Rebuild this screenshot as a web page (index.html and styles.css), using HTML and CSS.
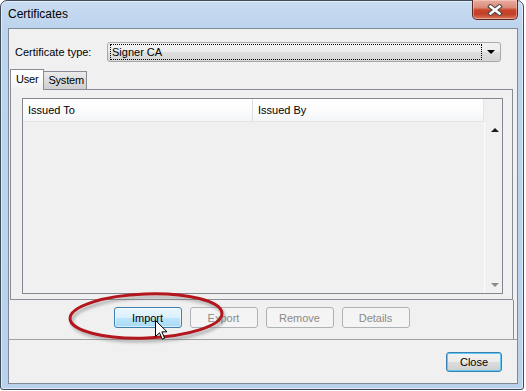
FILE: index.html
```html
<!doctype html>
<html lang="en">

<head>
    <meta charset="UTF-8" />
    <title>Certificates</title>
    <link rel="stylesheet" href="styles.css">
</head>

<body>
<div class="stage">
    <div class="window">
        <div class="titlebar">
            <span class="title">Certificates</span>
            <div class="close-x">
                <svg width="16" height="12" viewBox="0 0 16 12">
                    <path d="M3.5 2.5 L12.5 9.5 M12.5 2.5 L3.5 9.5" stroke="#4a4a4a" stroke-width="4.6" stroke-linecap="square" />
                    <path d="M3.5 2.5 L12.5 9.5 M12.5 2.5 L3.5 9.5" stroke="#fff" stroke-width="2.4" stroke-linecap="square" />
                </svg>
            </div>
        </div>

        <div class="client">
            <div class="main">
                <div class="type-row">
                    <label class="type-label">Certificate type:</label>
                    <div class="combo">
                        <span class="combo-value">Signer CA</span>
                        <span class="combo-arrow"></span>
                    </div>
                </div>

                <div class="tabs">
                    <div class="tab active">User</div>
                    <div class="tab">System</div>
                </div>

                <div class="tab-panel">
                    <div class="list">
                        <div class="list-header">
                            <div class="col first">Issued To</div>
                            <div class="col">Issued By</div>
                        </div>
                        <div class="list-corner"></div>
                        <div class="list-body"></div>
                        <div class="scrollbar">
                            <span class="arrow up"></span>
                            <span class="arrow down"></span>
                        </div>
                    </div>
                </div>

                <div class="actions">
                    <button class="btn hot">Import</button>
                    <button class="btn" disabled>Export</button>
                    <button class="btn" disabled>Remove</button>
                    <button class="btn" disabled>Details</button>
                </div>
            </div>

            <div class="footer">
                <button class="btn default">Close</button>
            </div>
        </div>
    </div>

    <!-- annotation drawn over the dialog -->
    <svg class="ring" width="180" height="70" viewBox="0 0 180 70">
        <defs>
            <filter id="soft" x="-20%" y="-40%" width="140%" height="180%">
                <feGaussianBlur stdDeviation="1.6" />
            </filter>
        </defs>
        <ellipse cx="88" cy="34" rx="76" ry="22" transform="rotate(-2 88 34)" fill="none" stroke="#777" stroke-opacity="0.55" stroke-width="3" filter="url(#soft)" />
        <ellipse cx="86" cy="31" rx="76" ry="22" transform="rotate(-2 86 31)" fill="none" stroke="#b3161d" stroke-width="3" />
    </svg>

    <svg class="pointer" width="14" height="21" viewBox="0 0 14 21">
        <path d="M0.5 0.5 V16.5 L4.5 12.8 L7.3 19.2 L9.6 18.2 L6.9 11.8 H12 Z" fill="#fff" stroke="#000" stroke-width="1" stroke-linejoin="round" />
    </svg>
</div>
</body>

</html>
```

FILE: styles.css
```css
* {
    box-sizing: border-box;
}

body {
    margin: 0;
    background: #fff;
    font-family: "Liberation Sans", Arial, sans-serif;
    font-size: 11px;
    color: #000;
}

.stage {
    position: relative;
    width: 526px;
    height: 391px;
}

.window {
    width: 524px;
    height: 390px;
    border: 1px solid #3e4b59;
    border-radius: 7px 7px 3px 3px;
    background: linear-gradient(to bottom, #c8dbf1 0, #bdd4ed 28px, #b9d1ea 100%);
    box-shadow: inset 0 0 0 1px rgba(255, 255, 255, 0.55);
    padding: 0 5px 5px 7px;
    display: flex;
    flex-direction: column;
}

.titlebar {
    height: 27px;
    display: flex;
    justify-content: space-between;
    align-items: flex-start;
}

.title {
    font-size: 12px;
    line-height: 14px;
    margin-top: 6px;
}

.close-x {
    width: 46px;
    height: 20px;
    margin-top: -1px;
    border: 1px solid #5c2a22;
    border-top: none;
    border-radius: 0 0 5px 5px;
    background: linear-gradient(to bottom, #e9ad9f 0, #dc8a78 40%, #c8452b 52%, #c24027 75%, #dc7b60 100%);
    box-shadow: inset 0 0 0 1px rgba(255, 220, 210, 0.45);
    display: flex;
    align-items: center;
    justify-content: center;
}

.client {
    flex: 1;
    background: #f0f0f0;
    border: 1px solid #7d8a97;
    display: flex;
    flex-direction: column;
}

.main {
    height: 311px;
    border-bottom: 1px solid #a0a0a0;
    display: flex;
    flex-direction: column;
}

.type-row {
    display: flex;
    align-items: center;
    margin: 13px 16px 0 6px;
}

.type-label {
    width: 92px;
    flex: none;
}

.combo {
    flex: 1;
    height: 20px;
    border: 1px solid #a9a9a9;
    border-radius: 3px;
    background: linear-gradient(to bottom, #f3f3f3 0, #ececec 50%, #dedede 51%, #d6d6d6 100%);
    display: flex;
    align-items: center;
    padding: 1px 5px 1px 2px;
}

.combo-value {
    flex: 1;
    height: 16px;
    line-height: 14px;
    border: 1px dotted #000;
    padding-left: 1px;
}

.combo-arrow {
    width: 0;
    height: 0;
    margin-left: 5px;
    border-left: 4px solid transparent;
    border-right: 4px solid transparent;
    border-top: 4px solid #000;
}

.tabs {
    display: flex;
    align-items: flex-end;
    height: 20px;
    margin: 7px 0 0 1px;
    position: relative;
    z-index: 1;
}

.tab {
    height: 18px;
    padding: 0 2px 0 4px;
    border: 1px solid #898c95;
    border-bottom: none;
    background: linear-gradient(to bottom, #ebebeb 0, #dcdcdc 50%, #cfcfcf 100%);
    line-height: 17px;
    margin-left: -1px;
    letter-spacing: -0.2px;
}

.tab.active {
    height: 21px;
    margin-bottom: -1px;
    padding: 0 5px 0 5px;
    margin-left: 0;
    background: linear-gradient(to bottom, #fff 0, #fbfbfb 50%, #f0f0f0 100%);
    line-height: 19px;
}

.tab-panel {
    height: 211px;
    margin: 0 4px 0 1px;
    border: 1px solid #898c95;
    padding: 8px 9px 5px 11px;
}

.list {
    height: 100%;
    border: 1px solid #828790;
    display: grid;
    grid-template-columns: 1fr 18px;
    grid-template-rows: 23px 1fr;
}

.list-header {
    display: flex;
    background: linear-gradient(to bottom, #fff 0, #fcfcfd 50%, #f4f5f7 100%);
    border-bottom: 1px solid #e3e4e6;
    border-right: 1px solid #e3e4e6;
}

.col {
    padding-left: 5px;
    line-height: 22px;
    flex: 1;
}

.col.first {
    flex: none;
    width: 230px;
    border-right: 1px solid #dcdde0;
}

.scrollbar {
    border-left: 1px solid #fbfbfb;
    position: relative;
}

.arrow {
    position: absolute;
    left: 6px;
    width: 0;
    height: 0;
    border-left: 4px solid transparent;
    border-right: 4px solid transparent;
}

.arrow.up {
    top: 6px;
    border-bottom: 4px solid #1a1a1a;
}

.arrow.down {
    bottom: 6px;
    border-top: 4px solid #8a8a8a;
}

.actions {
    flex: 1;
    margin-right: 3px;
    border-right: 1px solid #898c95;
    display: flex;
    justify-content: center;
    align-items: flex-start;
    gap: 8px;
    padding: 7px 0 0 1px;
}

.btn {
    width: 68px;
    height: 21px;
    border: 1px solid #adb2b5;
    border-radius: 3px;
    background: #f4f4f4;
    font-family: "Liberation Sans", Arial, sans-serif;
    font-size: 11px;
    color: #000;
    padding: 0;
}

.btn:disabled {
    color: #8a8a8a;
}

.btn.hot {
    border-color: #3c7fb1;
    background: linear-gradient(to bottom, #eaf6fd 0, #d9f0fc 50%, #bee6fd 51%, #a7d9f5 100%);
    box-shadow: inset 0 0 0 1px rgba(255, 255, 255, 0.6);
}

.footer {
    flex: 1;
    display: flex;
    justify-content: flex-end;
    align-items: flex-start;
    padding: 12px 15px 0 0;
}

.btn.default {
    width: 56px;
    height: 20px;
    border-color: #3c7fb1;
    background: linear-gradient(to bottom, #f2f2f2 0, #ebebeb 50%, #dddddd 51%, #cfcfcf 100%);
    box-shadow: inset 0 0 0 1px #5dcaf5;
}

.ring {
    position: absolute;
    left: 60px;
    top: 285px;
}

.pointer {
    position: absolute;
    left: 155px;
    top: 320px;
}
```
